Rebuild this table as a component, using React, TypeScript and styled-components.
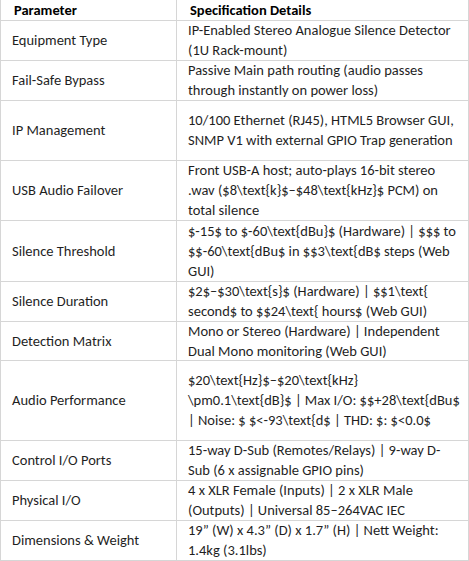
import styled, { createGlobalStyle } from "styled-components";

const GlobalStyle = createGlobalStyle`
  body {
    margin: 0;
    background: #ffffff;
    font-family: Carlito, Lato, "Liberation Sans", sans-serif;
  }
`;

const SpecTable = styled.table`
  border-collapse: collapse;
  table-layout: fixed;
  width: 468px;
  font-size: 14.5px;
  line-height: 20px;
  color: #1f1f1f;
  border-left: 1px solid #d6d6d6;
  border-right: 1px solid #d6d6d6;
  border-bottom: 1px solid #d6d6d6;
`;

const Row = styled.tr<{ $h: number }>`
  height: ${p => p.$h}px;
`;

const HeadCell = styled.th`
  padding: 0 4px 0 13px;
  text-align: left;
  font-weight: 700;
  line-height: 18px;
  color: #000;
  border-bottom: 1px solid #d6d6d6;
  border-left: 1px solid #d6d6d6;
  vertical-align: middle;
  white-space: nowrap;
`;

const Cell = styled.td`
  padding: 0 4px 0 11px;
  border-bottom: 1px solid #d6d6d6;
  border-left: 1px solid #d6d6d6;
  vertical-align: middle;
  overflow: hidden;
`;

const Detail = styled.div`
  margin: -1px 0;
`;

const Line = styled.span`
  display: block;
  white-space: nowrap;
`;

const rows: { name: string; lines: string[]; h: number }[] = [
  { name: "Equipment Type", lines: ["IP-Enabled Stereo Analogue Silence Detector", "(1U Rack-mount)"], h: 40 },
  { name: "Fail-Safe Bypass", lines: ["Passive Main path routing (audio passes", "through instantly on power loss)"], h: 40 },
  { name: "IP Management", lines: ["10/100 Ethernet (RJ45), HTML5 Browser GUI,", "SNMP V1 with external GPIO Trap generation"], h: 60 },
  { name: "USB Audio Failover", lines: ["Front USB-A host; auto-plays 16-bit stereo", ".wav ($8\\text{k}$–$48\\text{kHz}$ PCM) on", "total silence"], h: 60 },
  { name: "Silence Threshold", lines: ["$-15$ to $-60\\text{dBu}$ (Hardware) | $$$ to", "$$-60\\text{dBu$ in $$3\\text{dB$ steps (Web", "GUI)"], h: 61 },
  { name: "Silence Duration", lines: ["$2$–$30\\text{s}$ (Hardware) | $$1\\text{", "second$ to $$24\\text{ hours$ (Web GUI)"], h: 40 },
  { name: "Detection Matrix", lines: ["Mono or Stereo (Hardware) | Independent", "Dual Mono monitoring (Web GUI)"], h: 39 },
  { name: "Audio Performance", lines: ["$20\\text{Hz}$–$20\\text{kHz}", "\\pm0.1\\text{dB}$ | Max I/O: $$+28\\text{dBu$", "| Noise: $ $<-93\\text{d$ | THD: $: $<0.0$"], h: 80 },
  { name: "Control I/O Ports", lines: ["15-way D-Sub (Remotes/Relays) | 9-way D-", "Sub (6 x assignable GPIO pins)"], h: 40 },
  { name: "Physical I/O", lines: ["4 x XLR Female (Inputs) | 2 x XLR Male", "(Outputs) | Universal 85–264VAC IEC"], h: 40 },
  { name: "Dimensions & Weight", lines: ["19\u201D (W) x 4.3\u201D (D) x 1.7\u201D (H) | Nett Weight:", "1.4kg (3.1lbs)"], h: 40 },
];

const App = () => {
  return (
    <>
      <GlobalStyle />
      <SpecTable>
        <colgroup>
          <col style={{ width: 176 }} />
          <col style={{ width: 292 }} />
        </colgroup>
        <thead>
          <Row $h={20}>
            <HeadCell>Parameter</HeadCell>
            <HeadCell>Specification Details</HeadCell>
          </Row>
        </thead>
        <tbody>
          {rows.map(r => (
            <Row key={r.name} $h={r.h}>
              <Cell>{r.name}</Cell>
              <Cell>
                <Detail>
                  {r.lines.map(l => (
                    <Line key={l}>{l}</Line>
                  ))}
                </Detail>
              </Cell>
            </Row>
          ))}
        </tbody>
      </SpecTable>
    </>
  );
};

export default App;
